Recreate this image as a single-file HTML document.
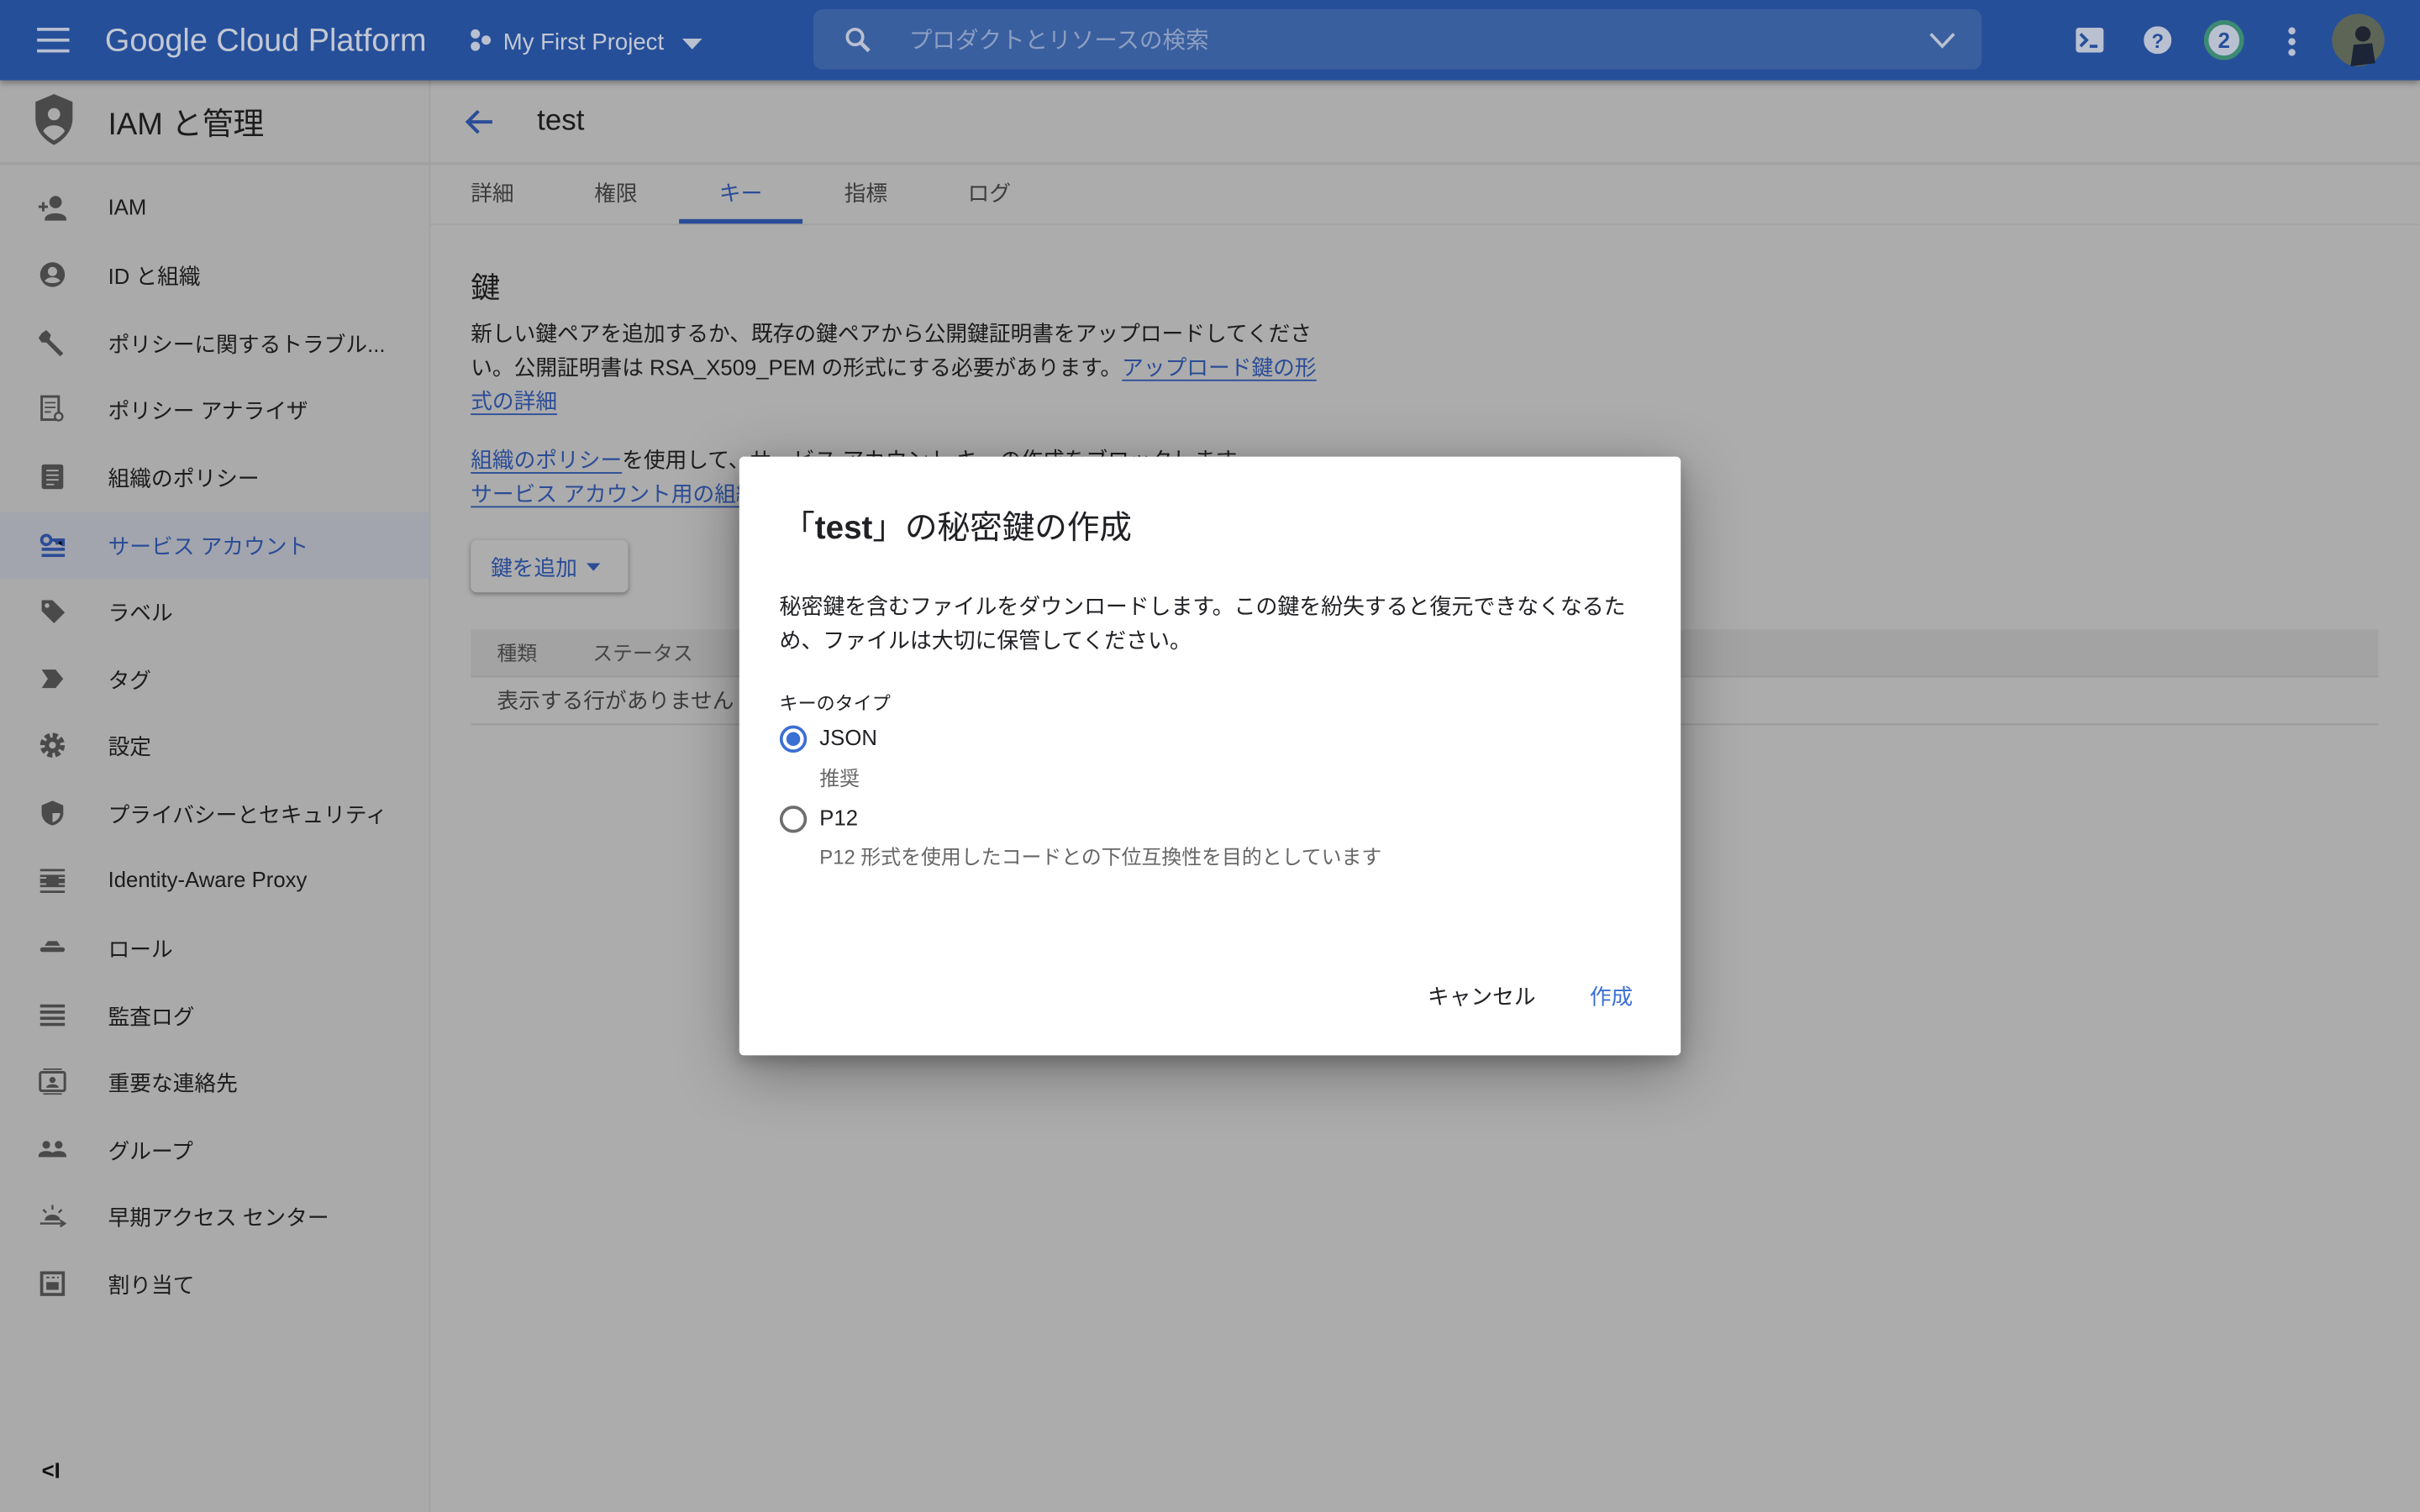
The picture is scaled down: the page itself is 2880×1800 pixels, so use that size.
<!DOCTYPE html>
<html><head><meta charset="utf-8">
<style>
html,body{margin:0;padding:0;width:2880px;height:1800px;overflow:hidden;background:#acacac;}
#w{position:absolute;left:0;top:0;width:1568px;height:980px;transform:scale(1.836735);transform-origin:0 0;background:#acacac;font-family:"Liberation Sans","Noto Sans CJK JP",sans-serif;color:#1c1c1c;}
.a{position:absolute;white-space:nowrap;}
.hdr{position:absolute;left:0;top:0;width:1568px;height:52px;background:#264f9a;box-shadow:0 2px 4px rgba(0,0,0,.35);z-index:2}
.side{position:absolute;left:0;top:52px;width:278px;height:928px;background:#aaaaaa;border-right:1px solid #a0a0a0;}
.item{position:absolute;left:0;width:278px;height:43px;font-size:14px;}
.item span{position:absolute;left:70px;top:12px;}
.item svg{position:absolute;left:24px;top:11px;}
.lnk{color:#2b4c97;border-bottom:1px solid #2b4c97;}
.p{font-size:14px;line-height:22px;}
</style></head><body><div id="w">
<div class="hdr">
 <svg class="a" style="left:24px;top:17px" width="21" height="18"><rect y="1" width="21" height="2" fill="#b9c0d0"/><rect y="8" width="21" height="2" fill="#b9c0d0"/><rect y="15" width="21" height="2" fill="#b9c0d0"/></svg>
 <div class="a" style="left:68px;top:15px;font-size:20.6px;color:#c3c8d3">Google Cloud Platform</div>
 <svg class="a" style="left:303px;top:18px" width="16" height="16"><circle cx="5" cy="4" r="3" fill="#b9c0d0"/><circle cx="12" cy="8" r="3" fill="#b9c0d0"/><circle cx="5" cy="12" r="3" fill="#b9c0d0"/></svg>
 <div class="a" style="left:326px;top:19px;font-size:15px;color:#c3c8d3">My First Project</div>
 <svg class="a" style="left:442px;top:25px" width="13" height="7"><path d="M0 0L13 0L6.5 7Z" fill="#b9c0d0"/></svg>
 <div class="a" style="left:527px;top:6px;width:757px;height:39px;background:#3a5f9f;border-radius:6px"></div>
 <svg class="a" style="left:547px;top:17px" width="18" height="18"><circle cx="7" cy="7" r="5" stroke="#b9c0d0" stroke-width="2" fill="none"/><path d="M11 11L16 16" stroke="#b9c0d0" stroke-width="2.5"/></svg>
 <div class="a" style="left:589px;top:15px;font-size:15px;color:#8d9fc2">プロダクトとリソースの検索</div>
 <svg class="a" style="left:1250px;top:21px" width="17" height="11"><path d="M1 1L8.5 9L16 1" stroke="#b9c0d0" stroke-width="2" fill="none"/></svg>
 <svg class="a" style="left:1345px;top:18px" width="18" height="16"><rect width="18" height="16" rx="2" fill="#b9c0d0"/><path d="M3 4L7 8L3 12" stroke="#264f9a" stroke-width="2" fill="none"/><rect x="9" y="11" width="5" height="2" fill="#264f9a"/></svg>
 <svg class="a" style="left:1389px;top:17px" width="18" height="18"><circle cx="9" cy="9" r="9" fill="#b9c0d0"/><text x="9" y="14" font-size="13" font-weight="bold" text-anchor="middle" fill="#264f9a" font-family="Liberation Sans">?</text></svg>
 <svg class="a" style="left:1428px;top:13px" width="26" height="26"><circle cx="13" cy="13" r="11.5" fill="#b9c0d0" stroke="#3c8a73" stroke-width="3"/><text x="13" y="18" font-size="14" font-weight="bold" text-anchor="middle" fill="#264f9a" font-family="Liberation Sans">2</text></svg>
 <svg class="a" style="left:1481px;top:17px" width="8" height="20"><circle cx="4" cy="3" r="2.3" fill="#b9c0d0"/><circle cx="4" cy="10" r="2.3" fill="#b9c0d0"/><circle cx="4" cy="17" r="2.3" fill="#b9c0d0"/></svg>
 <svg class="a" style="left:1511px;top:9px" width="34" height="34"><circle cx="17" cy="17" r="17" fill="#5d6656"/><circle cx="20" cy="13" r="5" fill="#1e2530"/><path d="M12 34L14 20L26 19L28 32Z" fill="#1c2538"/></svg>
</div>
<div class="side">
 <div class="a" style="left:0;top:0;width:278px;height:53px;border-bottom:2px solid #a0a0a0"></div>
 <svg class="a" style="left:21px;top:8px" width="28" height="36"><path d="M14 1L26 6V17C26 25 20 31 14 34C8 31 2 25 2 17V6Z" fill="#4a4a4a"/><circle cx="14" cy="14" r="4" fill="#aaa"/><path d="M7 25C9 20 19 20 21 25C19 28 16 30 14 31C12 30 9 28 7 25Z" fill="#aaa"/></svg>
 <div class="a" style="left:70px;top:12px;font-size:20px;">IAM と管理</div>
 <div class="item" style="top:62px"><svg width="20" height="20"><circle cx="12" cy="6" r="4" fill="#4a4a4a"/><path d="M5 17C5 12 19 12 19 17V18H5Z" fill="#4a4a4a"/><path d="M1 9H7M4 6V12" stroke="#4a4a4a" stroke-width="1.6"/></svg><span>IAM</span></div>
 <div class="item" style="top:105px"><svg width="20" height="20"><circle cx="10" cy="10" r="8" fill="#4a4a4a"/><circle cx="10" cy="8" r="3" fill="#aaa"/><path d="M5 14C7 11 13 11 15 14C13 16 7 16 5 14Z" fill="#aaa"/></svg><span>ID と組織</span></div>
 <div class="item" style="top:149px"><svg width="20" height="20"><path d="M3 4L6 2L9 5L8 8L17 17L15 19L6 10L3 10L1 7Z" fill="#4a4a4a"/></svg><span>ポリシーに関するトラブル...</span></div>
 <div class="item" style="top:192px"><svg width="20" height="20"><rect x="3" y="2" width="11" height="15" fill="none" stroke="#4a4a4a" stroke-width="1.6"/><path d="M5 6H12M5 9H12M5 12H9" stroke="#4a4a4a"/><circle cx="14" cy="15" r="2.5" fill="#aaa" stroke="#4a4a4a" stroke-width="1.3"/></svg><span>ポリシー アナライザ</span></div>
 <div class="item" style="top:236px"><svg width="20" height="20"><rect x="3" y="2" width="14" height="16" rx="1.5" fill="#4a4a4a"/><path d="M6 6H14M6 9H14M6 12H14M6 15H11" stroke="#aaa"/></svg><span>組織のポリシー</span></div>
 <div class="item" style="top:280px;background:#a2a5ad"><svg width="20" height="20"><circle cx="6" cy="7" r="3" fill="none" stroke="#2b4c97" stroke-width="2"/><path d="M9 7H17V11M13 7V10" stroke="#2b4c97" stroke-width="2"/><rect x="3" y="12" width="15" height="2" fill="#2b4c97"/><rect x="3" y="16" width="15" height="2" fill="#2b4c97"/></svg><span style="color:#2b4c97">サービス アカウント</span></div>
 <div class="item" style="top:323px"><svg width="20" height="20"><path d="M3 3H10L18 11L11 18L3 10Z" fill="#4a4a4a"/><circle cx="6.5" cy="6.5" r="1.5" fill="#aaa"/></svg><span>ラベル</span></div>
 <div class="item" style="top:367px"><svg width="20" height="20"><path d="M3 4H12L17 10L12 16H3L7 10Z" fill="#4a4a4a"/></svg><span>タグ</span></div>
 <div class="item" style="top:410px"><svg width="20" height="20"><circle cx="10" cy="10" r="6" fill="none" stroke="#4a4a4a" stroke-width="4" stroke-dasharray="3 1.7"/><circle cx="10" cy="10" r="5" fill="#4a4a4a"/><circle cx="10" cy="10" r="2.2" fill="#aaa"/></svg><span>設定</span></div>
 <div class="item" style="top:454px"><svg width="20" height="20"><path d="M10 2L17 5V10C17 14 14 17 10 18C6 17 3 14 3 10V5Z" fill="#4a4a4a"/><path d="M10 4V10H15C15 13 13 15 10 16Z" fill="#aaa"/></svg><span>プライバシーとセキュリティ</span></div>
 <div class="item" style="top:498px"><svg width="20" height="20"><path d="M2 3H18M2 17H18" stroke="#4a4a4a" stroke-width="1.5"/><rect x="2" y="6" width="16" height="8" fill="#4a4a4a"/><path d="M2 8H6M14 8H18M2 12H6M14 12H18" stroke="#aaa"/></svg><span>Identity-Aware Proxy</span></div>
 <div class="item" style="top:541px"><svg width="20" height="20"><path d="M5 9L7 6H13L15 9Z" fill="#4a4a4a"/><rect x="2" y="10" width="16" height="3" rx="1.5" fill="#4a4a4a"/></svg><span>ロール</span></div>
 <div class="item" style="top:585px"><svg width="20" height="20"><path d="M2 4H18M2 8H18M2 12H18M2 16H18" stroke="#4a4a4a" stroke-width="2"/></svg><span>監査ログ</span></div>
 <div class="item" style="top:628px"><svg width="20" height="20"><rect x="2" y="4" width="16" height="12" rx="1" fill="none" stroke="#4a4a4a" stroke-width="1.6"/><path d="M4 2H16M4 18H16" stroke="#4a4a4a"/><circle cx="10" cy="9" r="2" fill="#4a4a4a"/><path d="M6 14C6 11 14 11 14 14Z" fill="#4a4a4a"/></svg><span>重要な連絡先</span></div>
 <div class="item" style="top:672px"><svg width="20" height="20"><circle cx="6" cy="7" r="2.5" fill="#4a4a4a"/><circle cx="14" cy="7" r="2.5" fill="#4a4a4a"/><path d="M1 14C1 10 11 10 11 14V15H1ZM9 14C9 10 19 10 19 14V15H9Z" fill="#4a4a4a"/></svg><span>グループ</span></div>
 <div class="item" style="top:715px"><svg width="20" height="20"><path d="M5 13C5 8 15 8 15 13Z" fill="#4a4a4a"/><path d="M2 15H18M15 13L18 15L15 17M10 3V6M4 6L6 8M16 6L14 8" stroke="#4a4a4a" stroke-width="1.3" fill="none"/></svg><span>早期アクセス センター</span></div>
 <div class="item" style="top:759px"><svg width="20" height="20"><rect x="3" y="3" width="14" height="14" fill="none" stroke="#4a4a4a" stroke-width="2"/><rect x="6" y="9" width="8" height="5" fill="#4a4a4a"/><path d="M6 6H14" stroke="#4a4a4a" stroke-dasharray="2 1.5"/></svg><span>割り当て</span></div>
 <div class="a" style="left:27px;top:893px;font-size:14px;font-weight:bold;color:#111">&lt;I</div>
</div>
<!-- main -->
<div class="a" style="left:279px;top:52px;width:1289px;height:53px;border-bottom:2px solid #a2a2a2"></div>
<svg class="a" style="left:300px;top:70px" width="20" height="18"><path d="M19 9H3M10 2L3 9L10 16" stroke="#2b4c97" stroke-width="2.2" fill="none"/></svg>
<div class="a" style="left:348px;top:68px;font-size:19px">test</div>
<div class="a" style="left:279px;top:145px;width:1289px;height:1px;background:#a2a2a2"></div>
<div class="a" style="left:305px;top:115px;font-size:14px;color:#3c3c3c">詳細</div>
<div class="a" style="left:385px;top:115px;font-size:14px;color:#3c3c3c">権限</div>
<div class="a" style="left:466px;top:115px;font-size:14px;color:#2b4c97">キー</div>
<div class="a" style="left:547px;top:115px;font-size:14px;color:#3c3c3c">指標</div>
<div class="a" style="left:627px;top:115px;font-size:14px;color:#3c3c3c">ログ</div>
<div class="a" style="left:440px;top:142px;width:80px;height:3px;background:#2b4c97"></div>
<div class="a" style="left:305px;top:172px;font-size:19px">鍵</div>
<div class="a p" style="left:305px;top:205px">新しい鍵ペアを追加するか、既存の鍵ペアから公開鍵証明書をアップロードしてくださ</div>
<div class="a p" style="left:305px;top:227px">い。公開証明書は RSA_X509_PEM の形式にする必要があります。<span class="lnk">アップロード鍵の形</span></div>
<div class="a p" style="left:305px;top:249px"><span class="lnk">式の詳細</span></div>
<div class="a p" style="left:305px;top:287px"><span class="lnk">組織のポリシー</span>を使用して、サービス アカウント キーの作成をブロックします</div>
<div class="a p" style="left:305px;top:309px"><span class="lnk">サービス アカウント用の組織のポリシー</span></div>
<div class="a" style="left:305px;top:350px;width:102px;height:34px;background:#adadad;border-radius:4px;box-shadow:0 1px 3px rgba(0,0,0,.35)"></div>
<div class="a" style="left:318px;top:358px;font-size:14px;color:#2b4c97">鍵を追加</div>
<svg class="a" style="left:380px;top:365px" width="9" height="5"><path d="M0 0H9L4.5 5Z" fill="#2b4c97"/></svg>
<div class="a" style="left:305px;top:408px;width:1236px;height:30px;background:#a3a3a3;border-bottom:1px solid #9a9a9a"></div>
<div class="a" style="left:322px;top:413px;font-size:13px;color:#454545">種類</div>
<div class="a" style="left:384px;top:413px;font-size:13px;color:#454545">ステータス</div>
<div class="a" style="left:322px;top:444px;font-size:14px;color:#3c3c3c">表示する行がありません</div>
<div class="a" style="left:305px;top:469px;width:1236px;height:1px;background:#9a9a9a"></div>
<!-- dialog -->
<div class="a" style="left:479px;top:296px;width:610px;height:388px;background:#fff;border-radius:3px;box-shadow:0 10px 40px rgba(0,0,0,.35),0 4px 10px rgba(0,0,0,.2)">
 <div class="a" style="left:28px;top:30px;font-size:21px;color:#202124">「<b style="font-weight:bold">test</b>」の秘密鍵の作成</div>
 <div class="a" style="left:26px;top:86px;font-size:14.1px;line-height:22px;color:#202124">秘密鍵を含むファイルをダウンロードします。この鍵を紛失すると復元できなくなるた<br>め、ファイルは大切に保管してください。</div>
 <div class="a" style="left:26px;top:151px;font-size:12px;color:#202124">キーのタイプ</div>
 <svg class="a" style="left:26px;top:174px" width="18" height="18"><circle cx="9" cy="9" r="7.8" fill="none" stroke="#3b6fd4" stroke-width="2"/><circle cx="9" cy="9" r="4.5" fill="#3b6fd4"/></svg>
 <div class="a" style="left:52px;top:174px;font-size:14px;color:#202124">JSON</div>
 <div class="a" style="left:52px;top:198px;font-size:13px;color:#666">推奨</div>
 <svg class="a" style="left:26px;top:226px" width="18" height="18"><circle cx="9" cy="9" r="7.8" fill="none" stroke="#6e6e6e" stroke-width="2"/></svg>
 <div class="a" style="left:52px;top:226px;font-size:14px;color:#202124">P12</div>
 <div class="a" style="left:52px;top:249px;font-size:13px;color:#666">P12 形式を使用したコードとの下位互換性を目的としています</div>
 <div class="a" style="left:446px;top:340px;font-size:14px;color:#202124">キャンセル</div>
 <div class="a" style="left:551px;top:340px;font-size:14px;color:#3b6fd4">作成</div>
</div>
</div></body></html>
